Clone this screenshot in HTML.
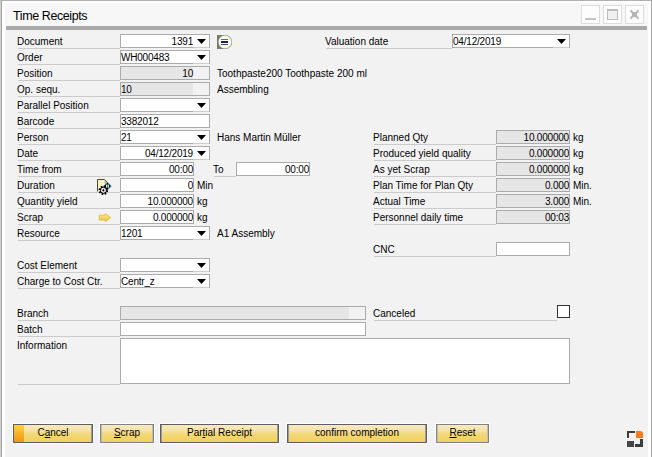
<!DOCTYPE html>
<html><head><meta charset="utf-8">
<style>
*{margin:0;padding:0;box-sizing:border-box}
html,body{width:652px;height:457px;overflow:hidden;background:#fafafa}
body{position:relative;font-family:"Liberation Sans",sans-serif;font-size:10px;color:#000}
.a{position:absolute}
#win{position:absolute;left:0;top:0;width:652px;height:457px;border-left:1px solid #d0d0d0;border-top:1px solid #b0b0b0;border-right:1px solid #a8a8a8;background:#fff}
#win2{position:absolute;left:1px;top:1px;width:1px;height:456px;background:#a4a4a4}
#tarea{position:absolute;left:5px;top:3px;width:643px;height:27px;background:#f7f7f7}
#title{position:absolute;left:13px;top:9px;font-size:12.5px;line-height:14px;color:#000;white-space:nowrap;letter-spacing:-0.4px}
#bar{position:absolute;left:6px;top:26px;width:641px;height:4px;background:#a9a9a9}
#content{position:absolute;left:5px;top:30px;width:643px;height:427px;background:#f2f2f2}
.tb{position:absolute;top:5px;width:19px;height:19px;border:1px solid #dcdcdc;background:#fdfdfd}
.lbl{position:absolute;white-space:nowrap;line-height:12px;height:12px}
.ln{position:absolute;height:1px;background:#cbcbcb}
.f{position:absolute;height:14px;border:1px solid #a9abac;background:#fff;white-space:nowrap;line-height:12px;padding:1px 0 0 0;overflow:visible;letter-spacing:-0.2px}
.g{background:#e6e6e6}
.r{text-align:right}
.dd{padding-right:16px}
.arr{position:absolute;right:3px;top:4px;width:9px;height:5px}
.btn{position:absolute;top:424px;height:19px;border:1px solid #5e5e64;background:linear-gradient(#f8eac0 0px,#f5e2a6 6px,#f3da84 8px,#f2d66e 11px,#f0d062 17px);box-shadow:0 0 0 1px rgba(255,255,255,0.85),inset 1px 0 0 #9c9c9c,inset -1px 0 0 #9c9c9c;text-align:center;line-height:17px;font-size:10px;color:#000;white-space:nowrap}
</style></head><body>
<div id="win"></div><div id="win2"></div><div id="tarea"></div>
<div id="title">Time Receipts</div>
<div class="tb" style="left:581px"><div class="a" style="left:3px;top:12px;width:11px;height:2px;background:#c4c4c4"></div></div>
<div class="tb" style="left:603px"><div class="a" style="left:3px;top:3px;width:11px;height:11px;border:1px solid #bcbcbc;border-top-width:2px;background:#f0f0f0"></div></div>
<div class="tb" style="left:625px"><svg class="a" style="left:0;top:0" width="17" height="17" viewBox="0 0 17 17"><path d="M5 5L12 12M12 5L5 12" stroke="#bababa" stroke-width="2.2" stroke-linecap="round"/><rect x="6" y="6" width="5" height="5" fill="#b4b4b4"/></svg></div>
<div id="bar"></div>
<div id="content"></div>
<div class="lbl" style="left:17px;top:36px;">Document</div>
<div class="ln" style="left:18px;top:48px;width:102px"></div>
<div class="lbl" style="left:17px;top:52px;">Order</div>
<div class="ln" style="left:18px;top:64px;width:102px"></div>
<div class="lbl" style="left:17px;top:68px;">Position</div>
<div class="ln" style="left:18px;top:80px;width:102px"></div>
<div class="lbl" style="left:17px;top:84px;">Op. sequ.</div>
<div class="ln" style="left:18px;top:96px;width:102px"></div>
<div class="lbl" style="left:17px;top:100px;">Parallel Position</div>
<div class="ln" style="left:18px;top:112px;width:102px"></div>
<div class="lbl" style="left:17px;top:116px;">Barcode</div>
<div class="ln" style="left:18px;top:128px;width:102px"></div>
<div class="lbl" style="left:17px;top:132px;">Person</div>
<div class="ln" style="left:18px;top:144px;width:102px"></div>
<div class="lbl" style="left:17px;top:148px;">Date</div>
<div class="ln" style="left:18px;top:160px;width:102px"></div>
<div class="lbl" style="left:17px;top:164px;">Time from</div>
<div class="ln" style="left:18px;top:176px;width:102px"></div>
<div class="lbl" style="left:17px;top:180px;">Duration</div>
<div class="ln" style="left:18px;top:192px;width:102px"></div>
<div class="lbl" style="left:17px;top:196px;">Quantity yield</div>
<div class="ln" style="left:18px;top:208px;width:102px"></div>
<div class="lbl" style="left:17px;top:212px;">Scrap</div>
<div class="ln" style="left:18px;top:224px;width:102px"></div>
<div class="lbl" style="left:17px;top:228px;">Resource</div>
<div class="ln" style="left:18px;top:240px;width:102px"></div>
<div class="lbl" style="left:17px;top:260px;">Cost Element</div>
<div class="ln" style="left:18px;top:272px;width:102px"></div>
<div class="lbl" style="left:17px;top:276px;">Charge to Cost Ctr.</div>
<div class="ln" style="left:18px;top:288px;width:102px"></div>
<div class="lbl" style="left:17px;top:308px;">Branch</div>
<div class="ln" style="left:18px;top:320px;width:102px"></div>
<div class="lbl" style="left:17px;top:324px;">Batch</div>
<div class="ln" style="left:18px;top:336px;width:102px"></div>
<div class="lbl" style="left:17px;top:340px;">Information</div>
<div class="ln" style="left:18px;top:384px;width:102px"></div>
<div class="f r dd" style="left:120px;top:34px;width:90px;height:14px;">1391<svg class="arr" viewBox="0 0 9 5"><path d="M0 0H9L4.5 5Z" fill="#000"/></svg><div class="a" style="left:72px;top:12px;width:16px;height:1px;background:#cdcdcd"></div></div>
<div class="f dd" style="left:120px;top:50px;width:90px;height:14px;">WH000483<svg class="arr" viewBox="0 0 9 5"><path d="M0 0H9L4.5 5Z" fill="#000"/></svg><div class="a" style="left:72px;top:12px;width:16px;height:1px;background:#cdcdcd"></div></div>
<div class="f g r" style="left:120px;top:66px;width:90px;height:14px;padding-right:16px;background:linear-gradient(90deg,#e6e6e6 72px,#f2f2f2 72px)">10</div>
<div class="f g" style="left:120px;top:82px;width:90px;height:14px;background:linear-gradient(90deg,#e6e6e6 72px,#f2f2f2 72px)">10</div>
<div class="f dd" style="left:120px;top:98px;width:90px;height:14px;"><svg class="arr" viewBox="0 0 9 5"><path d="M0 0H9L4.5 5Z" fill="#000"/></svg><div class="a" style="left:72px;top:12px;width:16px;height:1px;background:#cdcdcd"></div></div>
<div class="f" style="left:120px;top:114px;width:90px;height:14px;">3382012</div>
<div class="f dd" style="left:120px;top:130px;width:90px;height:14px;">21<svg class="arr" viewBox="0 0 9 5"><path d="M0 0H9L4.5 5Z" fill="#000"/></svg><div class="a" style="left:72px;top:12px;width:16px;height:1px;background:#cdcdcd"></div></div>
<div class="f r dd" style="left:120px;top:146px;width:90px;height:14px;">04/12/2019<svg class="arr" viewBox="0 0 9 5"><path d="M0 0H9L4.5 5Z" fill="#000"/></svg><div class="a" style="left:72px;top:12px;width:16px;height:1px;background:#cdcdcd"></div></div>
<div class="f r" style="left:120px;top:162px;width:74px;height:14px;">00:00</div>
<div class="lbl" style="left:213px;top:164px;">To</div>
<div class="ln" style="left:214px;top:176px;width:22px"></div>
<div class="f r" style="left:236px;top:162px;width:74px;height:14px;">00:00</div>
<div class="f r" style="left:120px;top:178px;width:74px;height:14px;">0</div>
<div class="lbl" style="left:197px;top:180px;">Min</div>
<div class="f r" style="left:120px;top:194px;width:74px;height:14px;">10.000000</div>
<div class="lbl" style="left:197px;top:196px;">kg</div>
<div class="f r" style="left:120px;top:210px;width:74px;height:14px;">0.000000</div>
<div class="lbl" style="left:197px;top:212px;">kg</div>
<div class="f dd" style="left:120px;top:226px;width:90px;height:14px;">1201<svg class="arr" viewBox="0 0 9 5"><path d="M0 0H9L4.5 5Z" fill="#000"/></svg><div class="a" style="left:72px;top:12px;width:16px;height:1px;background:#cdcdcd"></div></div>
<div class="f dd" style="left:120px;top:258px;width:90px;height:14px;"><svg class="arr" viewBox="0 0 9 5"><path d="M0 0H9L4.5 5Z" fill="#000"/></svg><div class="a" style="left:72px;top:12px;width:16px;height:1px;background:#cdcdcd"></div></div>
<div class="f dd" style="left:120px;top:274px;width:90px;height:14px;">Centr_z<svg class="arr" viewBox="0 0 9 5"><path d="M0 0H9L4.5 5Z" fill="#000"/></svg><div class="a" style="left:72px;top:12px;width:16px;height:1px;background:#cdcdcd"></div></div>
<div class="f g" style="left:120px;top:306px;width:246px;height:14px;background:linear-gradient(90deg,#e6e6e6 228px,#f2f2f2 228px)"></div>
<div class="f" style="left:120px;top:322px;width:246px;height:14px;"></div>
<div class="f" style="left:120px;top:338px;width:450px;height:46px;"></div>
<div class="lbl" style="left:217px;top:68px;">Toothpaste200 Toothpaste 200 ml</div>
<div class="lbl" style="left:217px;top:84px;">Assembling</div>
<div class="lbl" style="left:217px;top:132px;">Hans Martin M&uuml;ller</div>
<div class="lbl" style="left:217px;top:228px;">A1 Assembly</div>
<div class="lbl" style="left:325px;top:36px;">Valuation date</div>
<div class="ln" style="left:326px;top:48px;width:126px"></div>
<div class="f dd" style="left:452px;top:34px;width:118px;height:14px;">04/12/2019<svg class="arr" viewBox="0 0 9 5"><path d="M0 0H9L4.5 5Z" fill="#000"/></svg><div class="a" style="left:100px;top:12px;width:16px;height:1px;background:#cdcdcd"></div></div>
<div class="lbl" style="left:373px;top:132px;">Planned Qty</div>
<div class="ln" style="left:374px;top:144px;width:122px"></div>
<div class="f g r" style="left:496px;top:130px;width:74px;height:14px;">10.000000</div>
<div class="lbl" style="left:573px;top:132px;">kg</div>
<div class="lbl" style="left:373px;top:148px;">Produced yield quality</div>
<div class="ln" style="left:374px;top:160px;width:122px"></div>
<div class="f g r" style="left:496px;top:146px;width:74px;height:14px;">0.000000</div>
<div class="lbl" style="left:573px;top:148px;">kg</div>
<div class="lbl" style="left:373px;top:164px;">As yet Scrap</div>
<div class="ln" style="left:374px;top:176px;width:122px"></div>
<div class="f g r" style="left:496px;top:162px;width:74px;height:14px;">0.000000</div>
<div class="lbl" style="left:573px;top:164px;">kg</div>
<div class="lbl" style="left:373px;top:180px;">Plan Time for Plan Qty</div>
<div class="ln" style="left:374px;top:192px;width:122px"></div>
<div class="f g r" style="left:496px;top:178px;width:74px;height:14px;">0.000</div>
<div class="lbl" style="left:573px;top:180px;">Min.</div>
<div class="lbl" style="left:373px;top:196px;">Actual Time</div>
<div class="ln" style="left:374px;top:208px;width:122px"></div>
<div class="f g r" style="left:496px;top:194px;width:74px;height:14px;">3.000</div>
<div class="lbl" style="left:573px;top:196px;">Min.</div>
<div class="lbl" style="left:373px;top:212px;">Personnel daily time</div>
<div class="ln" style="left:374px;top:224px;width:122px"></div>
<div class="f g r" style="left:496px;top:210px;width:74px;height:14px;">00:03</div>
<div class="lbl" style="left:373px;top:244px;">CNC</div>
<div class="ln" style="left:374px;top:256px;width:122px"></div>
<div class="f" style="left:496px;top:242px;width:74px;height:14px;"></div>
<div class="lbl" style="left:373px;top:308px;">Canceled</div>
<div class="ln" style="left:374px;top:320px;width:183px"></div>
<div class="a" style="left:557px;top:305px;width:13px;height:13px;border:1px solid #333;background:#fff"></div>
<svg class="a" style="left:216px;top:34px" width="17" height="16" viewBox="0 0 17 16">
<defs><linearGradient id="dg" x1="0" y1="0" x2="1" y2="0"><stop offset="0" stop-color="#74746c"/><stop offset="1" stop-color="#a8a89c"/></linearGradient>
<radialGradient id="dr"><stop offset="0.6" stop-color="#fdfdf0"/><stop offset="0.85" stop-color="#f4f4e0"/><stop offset="1" stop-color="#8a8a7c"/></radialGradient></defs>
<path d="M1 1H9A7 7 0 0 1 9 15H1Z" fill="url(#dg)"/>
<circle cx="9" cy="8" r="7" fill="url(#dr)"/>
<rect x="5" y="5" width="7" height="1" fill="#5a6890"/><rect x="5" y="7" width="7" height="2" fill="#0c2466"/><rect x="5" y="10" width="7" height="1" fill="#3a4c80"/>
</svg>
<svg class="a" style="left:94px;top:176px" width="20" height="22" viewBox="0 0 20 22">
<path d="M3.5 15.5V3.5H10.5L13.5 6.5" fill="#f8f2c0" stroke="#4a4a38" stroke-width="1"/><path d="M4 4H10.3L13.5 7.2L11 15H4Z" fill="#f8f2c0"/>
<path d="M10.5 4V7.5H14Z" fill="#b4b4ac"/>
<path d="M13.5 6.4L17.2 10.1L13.5 13.8L9.8 10.1Z" fill="#000" stroke="#3a78c8" stroke-width="0.9"/>
<rect x="12" y="8.6" width="3" height="3" fill="#c8f4c0"/><rect x="13" y="9.6" width="1" height="1" fill="#000"/>
<circle cx="9.4" cy="14.3" r="3.9" fill="none" stroke="#000" stroke-width="1.8" stroke-dasharray="1.6 1.46"/>
<circle cx="9.4" cy="14.3" r="2.9" fill="none" stroke="#000" stroke-width="1.2"/>
<circle cx="9.4" cy="14.3" r="2.2" fill="#fff" stroke="#e0c8ea" stroke-width="0.5"/>
<path d="M8.2 14.3H10.6M9.4 13.1V15.5" stroke="#000" stroke-width="1"/>
</svg>
<svg class="a" style="left:98px;top:212px" width="14" height="11" viewBox="0 0 14 11">
<defs><linearGradient id="ag" x1="0" y1="0" x2="0" y2="1"><stop offset="0" stop-color="#fbec90"/><stop offset="1" stop-color="#eac234"/></linearGradient></defs>
<path d="M1.2 3.2H7.3V1.6L12.9 5.6L7.3 9.7V8.1H1.2Z" fill="url(#ag)" stroke="#dcb22c" stroke-width="0.7" stroke-linejoin="round"/>
</svg>
<div class="btn" style="left:13px;width:80px;border-color:#5e5e5e"><div class="a" style="left:0;top:0;width:10px;height:17px;background:linear-gradient(#fcd242,#f6b22c 50%,#f29818)"></div><span style="position:relative;top:-1px">C<u>a</u>ncel</span></div>
<div class="btn" style="left:100px;width:54px;border-color:#828282;box-shadow:0 0 0 1px rgba(255,255,255,0.85),inset 1px 0 0 #c0c0b0,inset -1px 0 0 #c0c0b0"><span style="position:relative;top:-1px"><u>S</u>crap</span></div>
<div class="btn" style="left:160px;width:119px;border-color:#5e5e5e"><span style="position:relative;top:-1px">Par<u>t</u>ial Receipt</span></div>
<div class="btn" style="left:287px;width:140px;border-color:#5e5e5e"><span style="position:relative;top:-1px">confirm completion</span></div>
<div class="btn" style="left:436px;width:53px;border-color:#828282;box-shadow:0 0 0 1px rgba(255,255,255,0.85),inset 1px 0 0 #c0c0b0,inset -1px 0 0 #c0c0b0"><span style="position:relative;top:-1px"><u>R</u>eset</span></div>
<svg class="a" style="left:627px;top:431px" width="16" height="16" viewBox="0 0 16 16">
<path d="M0 0H8V2H2V7H0Z" fill="#3c3c3c"/>
<path d="M9 0H13A3 3 0 0 1 16 3V7H9Z" fill="#f47a20"/>
<rect x="0" y="10" width="7" height="6" fill="#454545"/>
<path d="M13 8H16V16H8V13H13Z" fill="#3c3c3c"/>
</svg>
</body></html>
